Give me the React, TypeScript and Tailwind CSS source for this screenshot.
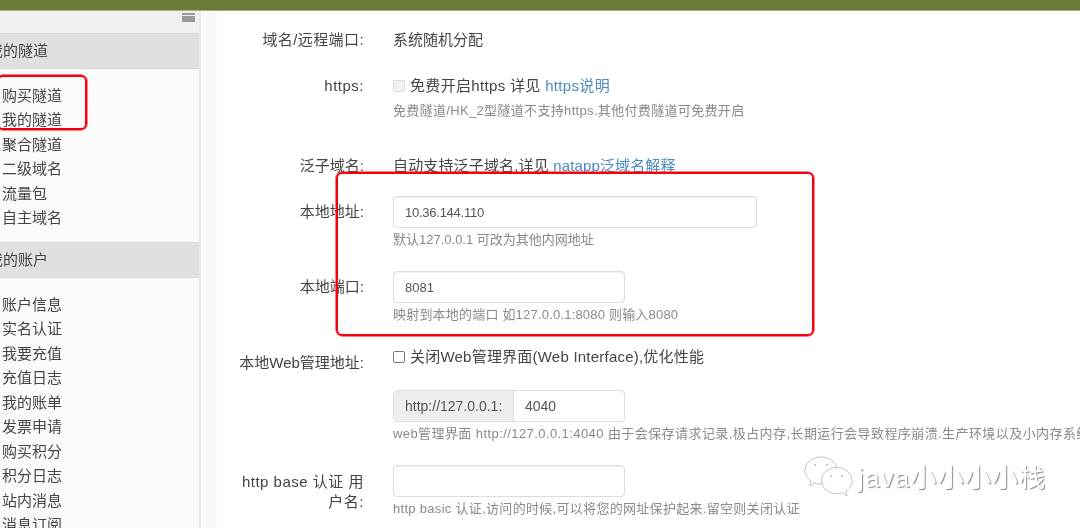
import React from 'react';

const tunnelLinks = ['购买隧道', '我的隧道', '聚合隧道', '二级域名', '流量包', '自主域名'];
const accountLinks = ['账户信息', '实名认证', '我要充值', '充值日志', '我的账单', '发票申请', '购买积分', '积分日志', '站内消息', '消息订阅'];

function SideLinks({ items, className }: { items: string[]; className: string }) {
  return (
    <ul className={className}>
      {items.map((item) => (
        <li key={item} className="h-[24.5px] pl-[2px] text-[15px] leading-[24.5px] text-[#444]">
          {item}
        </li>
      ))}
    </ul>
  );
}

function SideHeader({ title, className }: { title: string; className: string }) {
  return (
    <div className={`flex items-center border-y border-[#d8d8d8] bg-[#e0e0e0] text-[15px] text-[#444] ${className}`}>
      <span className="-ml-[12px]">{title}</span>
    </div>
  );
}

function Help({ children, className = '' }: { children: React.ReactNode; className?: string }) {
  return <div className={`h-4 whitespace-nowrap text-[13px] leading-4 text-[#8a8a8a] ${className}`}>{children}</div>;
}

function Label({ children, className }: { children: React.ReactNode; className: string }) {
  return (
    <div className={`w-[147px] shrink-0 pl-[18px] text-right text-[15px] text-[#444] ${className}`}>{children}</div>
  );
}

function TextInput({ value, className }: { value: string; className: string }) {
  return (
    <input
      readOnly
      value={value}
      className={`block h-8 rounded border border-[#dcdcdc] bg-white px-[11px] text-[13px] text-[#555] shadow-[inset_0_1px_1px_rgba(0,0,0,0.06)] outline-none ${className}`}
    />
  );
}

function WechatMark() {
  return (
    <svg width="50" height="44" viewBox="0 0 50 44" fill="#fff" stroke="#c4c4c4" strokeWidth="1">
      <path d="M17 2C8 2 1 8 1 15.500C1 20 3.500 23.500 7 26L5.500 31L11 28C13 29 15 29.200 18 29C17 22 23 13 33 12.500C31 6.500 25 2 17 2Z" />
      <circle cx="11" cy="10" r="1" fill="#bbb" stroke="none" />
      <circle cx="23" cy="10" r="1" fill="#bbb" stroke="none" />
      <path d="M33 12.500C24 12.500 17.500 18.500 17.500 25.500C17.500 33 24 38.500 33 38.500C35 38.500 37 38 38.500 37.500L43 41L42 35.500C46 33 48 29.500 48 25.500C48 18.500 41.500 12.500 33 12.500Z" />
      <circle cx="27" cy="21" r="1" fill="#bbb" stroke="none" />
      <circle cx="38" cy="21" r="1" fill="#bbb" stroke="none" />
    </svg>
  );
}

export default function App() {
  return (
    <div
      className="relative h-[528px] w-[1080px] overflow-hidden bg-white blur-[0.5px]"
      style={{ fontFamily: '"Liberation Sans", "Noto Sans CJK SC", sans-serif' }}
    >
      <div className="h-[11px] border-b border-[#a9b17f] bg-[#6b7a35]" />

      <div className="flex h-[517px]">
        <aside className="w-[201px] shrink-0 border-r-2 border-[#e8e8e8] bg-[#fafafa]">
          <div className="flex h-[22px] justify-end bg-[#f0f0f0] pt-[2px] pr-[4px]">
            <div className="flex h-[9px] w-[13px] flex-col gap-[1px]">
              <div className="h-[2px] bg-[#999]" />
              <div className="h-[6px] bg-[#999]" />
            </div>
          </div>
          <SideHeader title="我的隧道" className="h-[36px]" />
          <SideLinks items={tunnelLinks} className="h-[173px] pt-[14.5px]" />
          <SideHeader title="我的账户" className="h-[36px]" />
          <SideLinks items={accountLinks} className="pt-[14.5px]" />
        </aside>

        <div className="w-[16px] shrink-0 bg-[#faf9f7]" />

        <main className="min-w-0 flex-1">
          <div className="flex h-[58px] items-center">
            <Label className="tracking-[0.4px]">域名/远程端口:</Label>
            <div className="ml-[29px] text-[15px] text-[#444]">系统随机分配</div>
          </div>

          <div className="flex h-[80px]">
            <Label className="leading-[34px] tracking-[0.5px]">https:</Label>
            <div className="ml-[29px]">
              <div className="flex h-[34px] items-center text-[15px] tracking-[0.33px] text-[#444]">
                <input type="checkbox" disabled className="mr-[5px] h-3 w-3 appearance-none rounded-[2px] border border-[#ddd] bg-[#f2f2f2]" />
                <span>
                  免费开启https 详见 <span className="text-[#4a8bc2]">https说明</span>
                </span>
              </div>
              <Help className="tracking-[0.33px]">免费隧道/HK_2型隧道不支持https.其他付费隧道可免费开启</Help>
            </div>
          </div>

          <div className="mb-[24px] flex h-[23px]">
            <Label className="leading-[34px]">泛子域名:</Label>
            <div className="ml-[29px] h-[23px] overflow-hidden text-[15px] leading-[34px] tracking-[0.15px] text-[#444]">
              自动支持泛子域名,详见 <span className="text-[#4a8bc2]">natapp泛域名解释</span>
            </div>
          </div>

          <div className="mb-[23px] flex">
            <Label className="leading-8">本地地址:</Label>
            <div className="ml-[29px]">
              <TextInput value="10.36.144.110" className="w-[364px] tracking-[-0.25px]" />
              <div className="mt-1">
                <Help>默认127.0.0.1 可改为其他内网地址</Help>
              </div>
            </div>
          </div>

          <div className="flex h-[69px]">
            <Label className="leading-8">本地端口:</Label>
            <div className="ml-[29px]">
              <TextInput value="8081" className="w-[232px]" />
              <div className="mt-1">
                <Help className="tracking-[0.2px]">映射到本地的端口 如127.0.0.1:8080 则输入8080</Help>
              </div>
            </div>
          </div>

          <div className="flex h-[125px]">
            <Label className="pt-[12px] leading-[22px]">本地Web管理地址:</Label>
            <div className="ml-[29px]">
              <div className="flex h-[34px] items-center text-[15px] tracking-[0.22px] text-[#444]">
                <input type="checkbox" className="mr-[5px] h-3 w-3 appearance-none rounded-[2px] border border-[#777] bg-white" />
                <span>关闭Web管理界面(Web Interface),优化性能</span>
              </div>
              <div className="mt-[16px] flex h-8 w-[232px] rounded border border-[#dcdcdc] text-[14px] leading-[30px]">
                <div className="w-[120px] shrink-0 rounded-l border-r border-[#dcdcdc] bg-[#eeeeee] pl-[11px] text-[#555]">
                  http://127.0.0.1:
                </div>
                <div className="pl-[11px] text-[#555]">4040</div>
              </div>
              <div className="mt-1">
                <Help className="tracking-[0.42px]">web管理界面 http://127.0.0.1:4040 由于会保存请求记录,极占内存,长期运行会导致程序崩溃.生产环境以及小内存系统请关闭</Help>
              </div>
            </div>
          </div>

          <div className="flex">
            <Label className="pt-[7px] leading-5 tracking-[0.5px]">http base 认证 用户名:</Label>
            <div className="ml-[29px]">
              <TextInput value="" className="w-[232px]" />
              <div className="mt-1">
                <Help className="tracking-[0.3px]">http basic 认证,访问的时候,可以将您的网址保护起来.留空则关闭认证</Help>
              </div>
            </div>
          </div>
        </main>
      </div>

      {/* red annotations drawn over the screenshot */}
      <div className="absolute top-[75px] left-[-3px] h-[55px] w-[90px] rounded-md border-2 border-[#f5000f] shadow-[0_0_0_0.5px_#f5000f]" />
      <div className="absolute top-[172px] left-[336px] h-[164px] w-[478px] rounded-md border-2 border-[#f5000f] shadow-[0_0_0_0.5px_#f5000f]" />

      {/* watermark */}
      <div className="absolute top-[455px] left-[804px]">
        <WechatMark />
      </div>
      <div className="absolute top-[460px] left-[858px] text-[26px] leading-[36px] tracking-[1.2px] whitespace-nowrap text-white [text-shadow:1px_1px_1px_#888]">
        java小小小小栈
      </div>
    </div>
  );
}
